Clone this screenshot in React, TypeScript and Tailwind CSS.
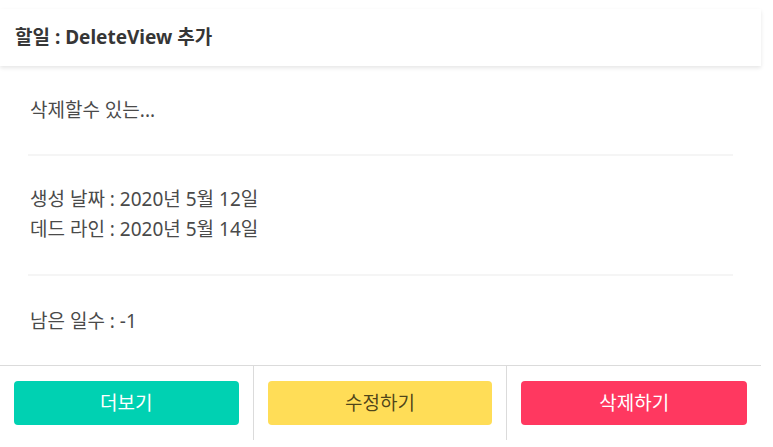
import React from "react";

const FONT = {
  fontFamily: '"Noto Sans", "Noto Sans CJK KR", sans-serif',
};

const App = () => {
  return (
    <div className="h-[447px] w-[773px] bg-white" style={FONT}>
      <div className="w-[761px] bg-white pt-[9px]">
        <header className="flex h-[57px] items-center px-[15px] shadow-[0_2px_4px_rgba(10,10,10,0.1)]">
          <p className="text-[19px] font-bold text-[#363636]">
            할일 : DeleteView 추가
          </p>
        </header>

        <div className="px-[28px] text-[19px] text-[#4a4a4a]">
          <div className="py-[32px] pl-[2px] leading-6">삭제할수 있는...</div>
          <hr className="h-[2px] border-0 bg-[#f5f5f5]" />
          <div className="pt-[28px] pb-[30px] pl-[2px] leading-[30px]">
            <p>생성 날짜 : 2020년 5월 12일</p>
            <p>데드 라인 : 2020년 5월 14일</p>
          </div>
          <hr className="h-[2px] border-0 bg-[#f5f5f5]" />
          <div className="pt-[33px] pb-[32px] pl-[2px] leading-6">
            남은 일수 : -1
          </div>
        </div>

        <footer className="grid grid-cols-3 border-t border-[#dbdbdb]">
          <div className="border-r border-[#dbdbdb] px-[14px] py-[15px]">
            <button className="flex h-[44px] w-full items-center justify-center rounded-[4px] bg-[#00d1b2] text-[19px] text-white">
              더보기
            </button>
          </div>
          <div className="border-r border-[#dbdbdb] px-[14px] py-[15px]">
            <button className="flex h-[44px] w-full items-center justify-center rounded-[4px] bg-[#ffdd57] text-[19px] text-[rgba(0,0,0,0.7)]">
              수정하기
            </button>
          </div>
          <div className="px-[14px] py-[15px]">
            <button className="flex h-[44px] w-full items-center justify-center rounded-[4px] bg-[#ff3860] text-[19px] text-white">
              삭제하기
            </button>
          </div>
        </footer>
      </div>
    </div>
  );
};

export default App;
